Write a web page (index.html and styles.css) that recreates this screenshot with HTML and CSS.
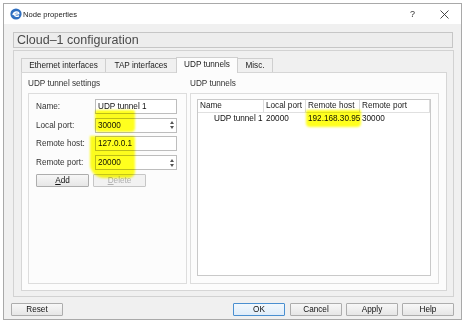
FILE: index.html
```html
<!DOCTYPE html>
<html lang="en">
<head>
  <meta charset="UTF-8">
  <title>Node properties</title>
  <link rel="stylesheet" href="styles.css">
</head>
<body>
  <div class="window">
    <div class="titlebar">
      <svg class="app-icon" width="12" height="12" viewBox="0 0 12 12">
        <circle cx="6" cy="6" r="5.6" fill="#2f6fc0"/>
        <path d="M3 7.2 C3.5 3.5 8.5 3 8.8 5.6 L4.4 6.4 C4.8 8.6 7.4 8.8 8.9 7.6" fill="none" stroke="#fff" stroke-width="1.4"/>
      </svg>
      <span class="title">Node properties</span>
      <span class="help">?</span>
      <svg class="close" width="9" height="9" viewBox="0 0 9 9">
        <path d="M0.5 0.5 L8.5 8.5 M8.5 0.5 L0.5 8.5" stroke="#333" stroke-width="0.9"/>
      </svg>
    </div>

    <div class="content">
      <div class="heading">Cloud‒1 configuration</div>

      <div class="frame">
        <div class="tabs">
          <div class="tab tab-eth">Ethernet interfaces</div>
          <div class="tab tab-tap">TAP interfaces</div>
          <div class="tab tab-udp active">UDP tunnels</div>
          <div class="tab tab-misc">Misc.</div>
        </div>

        <div class="pane">
          <div class="group">
            <div class="group-title">UDP tunnel settings</div>
            <div class="group-box settings">
              <div class="form">
                <label>Name:</label>
                <div class="field">UDP tunnel 1</div>

                <label>Local port:</label>
                <div class="field spinbox">
                  <span class="value">30000</span>
                  <span class="arrows"><i class="up"></i><i class="down"></i></span>
                </div>

                <label>Remote host:</label>
                <div class="field">127.0.0.1</div>

                <label>Remote port:</label>
                <div class="field spinbox">
                  <span class="value">20000</span>
                  <span class="arrows"><i class="up"></i><i class="down"></i></span>
                </div>
              </div>
              <div class="actions">
                <button class="btn"><u>A</u>dd</button>
                <button class="btn" disabled><u>D</u>elete</button>
              </div>
            </div>
          </div>

          <div class="group">
            <div class="group-title">UDP tunnels</div>
            <div class="group-box tunnels">
              <div class="list">
                <div class="list-row list-head">
                  <span class="col-name">Name</span>
                  <span class="col-local">Local port</span>
                  <span class="col-host">Remote host</span>
                  <span class="col-remote">Remote port</span>
                </div>
                <div class="list-row">
                  <span class="col-name indent">UDP tunnel 1</span>
                  <span class="col-local">20000</span>
                  <span class="col-host">192.168.30.95</span>
                  <span class="col-remote">30000</span>
                </div>
              </div>
            </div>
          </div>
        </div>
      </div>

      <div class="dialog-buttons">
        <button class="btn">Reset</button>
        <span class="spacer"></span>
        <button class="btn default">OK</button>
        <button class="btn">Cancel</button>
        <button class="btn">Apply</button>
        <button class="btn">Help</button>
      </div>
    </div>
  </div>

  <!-- yellow marker strokes drawn over the screenshot -->
  <div class="marker marker-local"></div>
  <div class="marker marker-remote"></div>
  <div class="marker marker-host"></div>
</body>
</html>
```

FILE: styles.css
```css
* {
  box-sizing: border-box;
}

body {
  margin: 0;
  background: #fff;
  font-family: "Liberation Sans", Arial, sans-serif;
  font-size: 8.2px;
  color: #222;
}

.window {
  margin: 3px 0 0 3px;
  width: 459px;
  height: 317px;
  border: 1px solid #a9a9a9;
  background: #f0f0f0;
  display: flex;
  flex-direction: column;
}

/* title bar */
.titlebar {
  height: 20px;
  background: #fff;
  display: flex;
  align-items: center;
  padding: 0 12px 0 6px;
}

.app-icon {
  margin-right: 1px;
}

.title {
  flex: 1;
  font-size: 7.6px;
  color: #222;
}

.help {
  font-size: 9px;
  color: #333;
  margin-right: 25px;
}

/* main area */
.content {
  flex: 1;
  padding: 8px 8px 0 9px;
}

.heading {
  height: 16px;
  border: 1px solid #c6c6c6;
  background: #ededed;
  font-size: 12.5px;
  line-height: 14px;
  padding-left: 3px;
  color: #4a4a4a;
}

.frame {
  margin: 2px -1px 0 0;
  height: 247px;
  border: 1px solid #d2d2d2;
  padding: 6px 6px 5px 7px;
  display: flex;
  flex-direction: column;
}

.tabs {
  display: flex;
  align-items: flex-end;
  height: 15px;
}

.tab {
  height: 14px;
  border: 1px solid #cfcfcf;
  border-bottom: none;
  background: #f0f0f0;
  text-align: center;
  line-height: 13px;
  margin-right: -1px;
}

.tab-eth { width: 85px; }
.tab-tap { width: 72px; }
.tab-udp { width: 62px; }
.tab-misc { width: 36px; }

.tab.active {
  height: 16px;
  background: #fcfcfc;
  margin-bottom: -1px;
  position: relative;
  line-height: 14px;
}

.pane {
  flex: 1;
  border: 1px solid #d6d6d6;
  background: #fcfcfc;
  padding: 5px 7px 6px 6px;
  display: grid;
  grid-template-columns: 159px 1fr;
  column-gap: 3px;
}

.group {
  display: flex;
  flex-direction: column;
}

.group-title {
  height: 15px;
  line-height: 12px;
  color: #333;
}

.group-box {
  flex: 1;
  border: 1px solid #dddddd;
}

/* settings form */
.settings {
  padding: 5px 8px 0 7px;
}

.form {
  display: grid;
  grid-template-columns: 59px 82px;
  grid-auto-rows: 15px;
  row-gap: 3.7px;
  align-items: center;
}

.form label {
  color: #333;
}

.field {
  height: 15px;
  border: 1px solid #bdbdbd;
  background: #fff;
  line-height: 13px;
  padding-left: 2px;
  color: #111;
}

.spinbox {
  display: flex;
  padding-right: 0;
}

.spinbox .value {
  flex: 1;
}

.arrows {
  width: 9px;
  display: flex;
  flex-direction: column;
  align-items: center;
  justify-content: center;
  gap: 2px;
}

.arrows i {
  width: 0;
  height: 0;
  border-left: 2.5px solid transparent;
  border-right: 2.5px solid transparent;
}

.arrows .up {
  border-bottom: 3px solid #555;
}

.arrows .down {
  border-top: 3px solid #555;
}

.actions {
  display: flex;
  gap: 4px;
  margin-top: 4px;
}

.actions .btn {
  width: 53px;
}

/* buttons */
.btn {
  height: 13px;
  width: 52px;
  padding: 0;
  border: 1px solid #adadad;
  border-radius: 1px;
  background: linear-gradient(#f7f7f7, #e6e6e6);
  font-family: inherit;
  font-size: 8.2px;
  line-height: 11px;
  color: #111;
}

.btn:disabled {
  color: #b0b0b0;
  border-color: #c6c6c6;
  background: #f2f2f2;
}

.btn.default {
  border-color: #4a8fd0;
  background: linear-gradient(#f2f8fd, #dfecf9);
}

/* tunnels list */
.tunnels {
  padding: 5px 7px 7px 6px;
  display: flex;
}

.list {
  flex: 1;
  border: 1px solid #c9c9c9;
  background: #fff;
}

.list-row {
  display: flex;
  height: 12px;
  line-height: 12px;
  color: #111;
}

.list-head {
  height: 13px;
  border-bottom: 1px solid #e0e0e0;
  color: #222;
}

.list-head span {
  border-right: 1px solid #dcdcdc;
}

.list-row span {
  padding-left: 2px;
  white-space: nowrap;
}

.col-name { width: 66px; }
.col-local { width: 42px; }
.col-host { width: 54px; }
.col-remote { width: 70px; }

.list-row .indent {
  padding-left: 16px;
}

.dialog-buttons {
  display: flex;
  gap: 4px;
  margin: 6px -1px 0 -2px;
}

.dialog-buttons .default {
  margin-right: 1px;
}

.spacer {
  flex: 1;
}

/* highlighter */
.marker {
  position: absolute;
  background: #ffff1e;
  mix-blend-mode: multiply;
  filter: blur(1px);
}

.marker-local {
  left: 95px;
  top: 110px;
  width: 40px;
  height: 22px;
  border-radius: 2px 2px 4px 4px;
}

.marker-remote {
  left: 90px;
  top: 136px;
  width: 45px;
  height: 42px;
  border-radius: 0 2px 6px 14px;
}

.marker-host {
  left: 306px;
  top: 110px;
  width: 55px;
  height: 17px;
  border-radius: 1px 1px 4px 4px;
}
```
